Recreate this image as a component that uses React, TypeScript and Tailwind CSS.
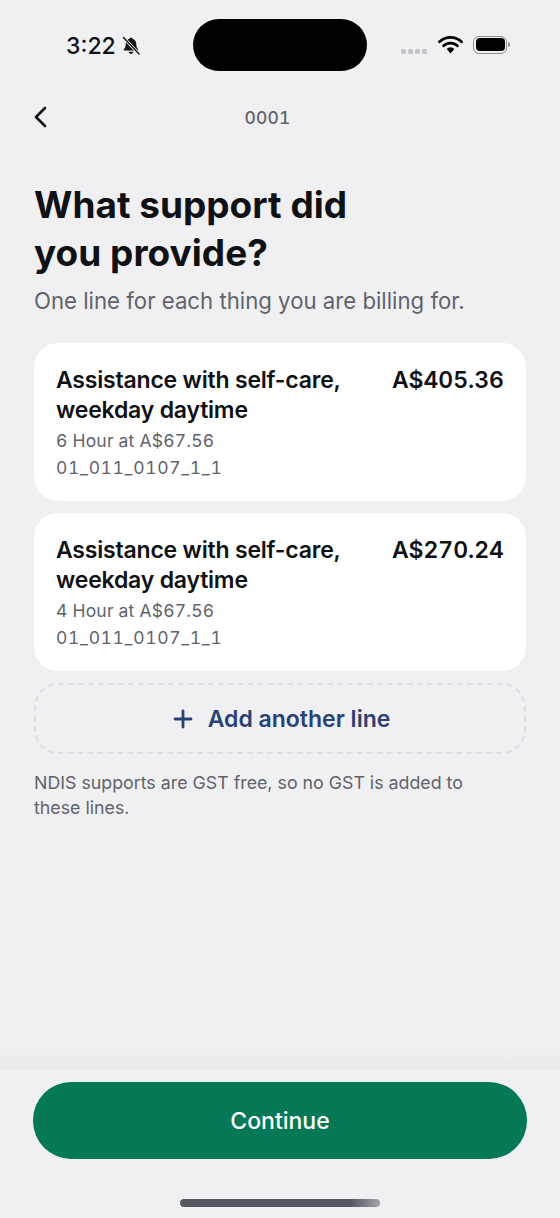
import React from 'react';

const lines = [
  { amount: 'A$405.36', qty: '6 Hour at A$67.56' },
  { amount: 'A$270.24', qty: '4 Hour at A$67.56' },
];

const BellOff = () => (
  <svg width="20" height="20" viewBox="0 0 20 20" className="text-[#111315]">
    <path d="M10 1.5c.8 0 1.3.6 1.4 1.3 2.6.7 3.9 3 3.9 5.7 0 2.4.7 3.6 1.9 4.9.4.5.1 1.1-.5 1.1H3.3c-.6 0-.9-.6-.5-1.1 1.2-1.3 1.9-2.5 1.9-4.9 0-2.7 1.3-5 3.9-5.7.1-.7.6-1.3 1.4-1.3Z" fill="currentColor" />
    <path d="M7.6 15.7h4.8c-.2 1.2-1.2 2.1-2.4 2.1s-2.2-.9-2.4-2.1Z" fill="currentColor" />
    <path d="M2.5 1.5 18 18" stroke="#f0f0f3" strokeWidth="3.2" />
    <path d="M2.5 1.5 18 18" stroke="currentColor" strokeWidth="1.4" strokeLinecap="round" />
  </svg>
);

const StatusBar = () => (
  <div className="flex h-[92px] shrink-0 items-start pl-[66px] pr-[49px] pt-[19px]">
    <div className="flex h-[52px] w-[127px] items-center gap-[5px] pt-[2px]">
      <span className="text-[23px] font-medium leading-none text-[#111315]">3:22</span>
      <BellOff />
    </div>
    <div className="h-[52px] w-[174px] rounded-[26px] bg-black" />
    <div className="ml-[34px] flex h-[52px] flex-1 items-center">
      <div className="mt-[12px] flex gap-[2px]">
        {[0, 1, 2, 3].map(i => (
          <span key={i} className="h-[5px] w-[5px] rounded-[1.5px] bg-[#c4c5c8]" />
        ))}
      </div>
      <svg width="25" height="19" viewBox="0 0 25 19" className="ml-[11px] mt-[-1px]">
        <path d="M1.5 6.8a15.8 15.8 0 0 1 22 0" fill="none" stroke="#000" strokeWidth="2.8" strokeLinecap="round" />
        <path d="M5.6 10.8a10 10 0 0 1 13.8 0" fill="none" stroke="#000" strokeWidth="2.8" strokeLinecap="round" />
        <path d="M8.7 14a5 5 0 0 1 7.6 0L12.5 18.4Z" fill="#000" />
      </svg>
      <div className="ml-[10px] mt-[-1px] flex items-center">
        <div className="flex h-[18px] w-[34px] items-center justify-center rounded-[6px] border border-[#8e8e90] p-[1.5px]">
          <div className="h-full w-full rounded-[4px] bg-black" />
        </div>
        <div className="ml-[1px] h-[5px] w-[2px] rounded-r-full bg-[#8e8e90]" />
      </div>
    </div>
  </div>
);

export default function App() {
  return (
    <div className="flex h-[1218px] w-[560px] flex-col overflow-hidden bg-[#f0f0f3] font-['Inter',sans-serif]">
      <StatusBar />

      <div className="relative flex h-[50px] shrink-0 items-center justify-center">
        <svg width="16" height="24" viewBox="0 0 16 24" className="absolute left-[32px] top-[13px]">
          <path d="M13 3 4 12l9 9" fill="none" stroke="#0f1113" strokeWidth="2.6" strokeLinecap="round" strokeLinejoin="round" />
        </svg>
        <span className="mr-[25px] mt-[2px] text-[17.5px] font-medium tracking-[0.2px] tabular-nums text-[#5f636b]">0001</span>
      </div>

      <div className="flex flex-1 flex-col px-[34px]">
        <h1 className="mt-[39px] text-[37px] font-bold leading-[48px] text-[#0f1113]">
          What support did<br />you provide?
        </h1>
        <p className="mt-[8px] text-[22.2px] leading-[32px] text-[#5f636b]">One line for each thing you are billing for.</p>

        <div className="mt-[26px] flex flex-col gap-[12px]">
          {lines.map((line, i) => (
            <div key={i} className="flex h-[158px] items-start justify-between rounded-[24px] bg-white px-[22px] pt-[22px]">
              <div>
                <div className="text-[23px] font-semibold leading-[30px] tracking-[-0.2px] text-[#0f1113]">
                  Assistance with self-care,<br />weekday daytime
                </div>
                <div className="mt-[2px] text-[17.5px] leading-[27px] tracking-[0.2px] tabular-nums text-[#5f636b]">{line.qty}</div>
                <div className="text-[17.5px] leading-[27px] tracking-[0.65px] tabular-nums text-[#5f636b]">01_011_0107_1_1</div>
              </div>
              <div className="text-[23px] font-semibold leading-[30px] tabular-nums text-[#0f1113]">{line.amount}</div>
            </div>
          ))}
        </div>

        <button className="mt-[12px] flex h-[71px] items-center justify-center gap-[14px] rounded-[24px] border-2 border-dashed border-[#dedfe3] pl-[2px] pt-[1px] text-[23px] font-semibold text-[#2a4175]">
          <svg width="22" height="22" viewBox="0 0 22 22">
            <path d="M3 11h16M11 3v16" fill="none" stroke="#2a4175" strokeWidth="2.8" strokeLinecap="round" />
          </svg>
          Add another line
        </button>

        <p className="mt-[16px] text-[17.8px] leading-[25px] text-[#5f636b]">
          NDIS supports are GST free, so no GST is added to<br />these lines.
        </p>
      </div>

      <div className="h-[20px] shrink-0 bg-gradient-to-b from-[#f0f0f3] to-[#e9e9ec]" />
      <div className="flex h-[148px] shrink-0 flex-col items-center px-[33px] pt-[12px]">
        <button className="h-[77px] w-full rounded-[38px] bg-[#057857] pt-[2px] text-[23px] font-medium text-white">Continue</button>
        <div className="mt-[40px] h-[8px] w-[200px] rounded-full bg-gradient-to-r from-[#55585f] via-[#55585f] via-85% to-[#a3a4a9]" />
      </div>
    </div>
  );
}
